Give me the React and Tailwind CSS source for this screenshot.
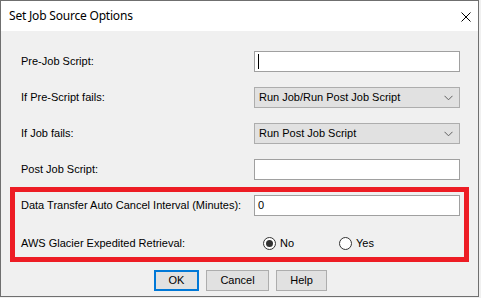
import { useState } from 'react';

function Chevron() {
  return (
    <svg width="9" height="6" viewBox="0 0 9 6" className="shrink-0">
      <path d="M0.5 0.8 L4.5 4.8 L8.5 0.8" fill="none" stroke="#606060" strokeWidth="1" />
    </svg>
  );
}

function Dropdown({ value }) {
  return (
    <div className="w-[206px] h-[21px] bg-[#e1e1e1] border border-[#adadad] flex items-center justify-between pl-[4px] pr-[6px]">
      <span>{value}</span>
      <Chevron />
    </div>
  );
}

function TextBox({ value, caret }) {
  return (
    <div className="w-[206px] h-[21px] bg-white border border-[#a0a0a0] flex items-center pl-[3px]">
      {caret && <span className="w-px h-[15px] bg-black" />}
      {value && <span>{value}</span>}
    </div>
  );
}

function Radio({ checked, label, onClick }) {
  return (
    <button type="button" onClick={onClick} className="flex items-center gap-[4px]">
      <span className="w-[13px] h-[13px] rounded-full border border-[#333333] bg-white flex items-center justify-center">
        {checked && <span className="w-[7px] h-[7px] rounded-full bg-[#333333]" />}
      </span>
      <span>{label}</span>
    </button>
  );
}

function Row({ label, children }) {
  return (
    <div className="flex items-center h-[21px]">
      <span className="w-[233px] shrink-0">{label}</span>
      {children}
    </div>
  );
}

export default function App() {
  const [expedited, setExpedited] = useState(false);

  return (
    <div className="w-[481px] h-[298px] bg-[#f0f0f0] font-['Liberation_Sans',Arial,sans-serif] text-[11px] text-black">
      <div className="w-[479px] h-[297px] border border-[#6f6f6f] flex flex-col bg-[#f0f0f0]">
        {/* title bar */}
        <div className="h-[30px] shrink-0 bg-white flex items-center justify-between pl-[8px] pr-[7px]">
          <span className="font-['Noto_Sans',sans-serif] text-[12px] tracking-[-0.2px]">Set Job Source Options</span>
          <svg width="10" height="10" viewBox="0 0 10 10" className="mt-[2px]">
            <path d="M0.5 0.5 L9.5 9.5 M9.5 0.5 L0.5 9.5" stroke="#000" strokeWidth="1" />
          </svg>
        </div>

        {/* body */}
        <div className="flex-1 pt-[20px] px-[9px]">
          <div className="flex flex-col gap-[15px] pl-[11px]">
            <Row label="Pre-Job Script:">
              <TextBox caret />
            </Row>
            <Row label="If Pre-Script fails:">
              <Dropdown value="Run Job/Run Post Job Script" />
            </Row>
            <Row label="If Job fails:">
              <Dropdown value="Run Post Job Script" />
            </Row>
            <Row label="Post Job Script:">
              <TextBox />
            </Row>
          </div>

          <div className="mt-[7px] w-[459px] border-[5px] border-[#ed1c24] pt-[3px] pb-[3px] pl-[6px]">
            <Row label="Data Transfer Auto Cancel Interval (Minutes):">
              <TextBox value="0" />
            </Row>
            <div className="mt-[17px]">
              <Row label="AWS Glacier Expedited Retrieval:">
                <div className="flex items-center pl-[9px]">
                  <div className="w-[76px]">
                    <Radio checked={!expedited} label="No" onClick={() => setExpedited(false)} />
                  </div>
                  <Radio checked={expedited} label="Yes" onClick={() => setExpedited(true)} />
                </div>
              </Row>
            </div>
          </div>

          <div className="mt-[8px] flex justify-center gap-[7px] pl-[2px]">
            <button className="w-[45px] h-[21px] bg-[#e1e1e1] border-2 border-[#0078d7]">OK</button>
            <button className="w-[63px] h-[21px] bg-[#e1e1e1] border border-[#adadad]">Cancel</button>
            <button className="w-[51px] h-[21px] bg-[#e1e1e1] border border-[#adadad]">Help</button>
          </div>
        </div>
      </div>
    </div>
  );
}
